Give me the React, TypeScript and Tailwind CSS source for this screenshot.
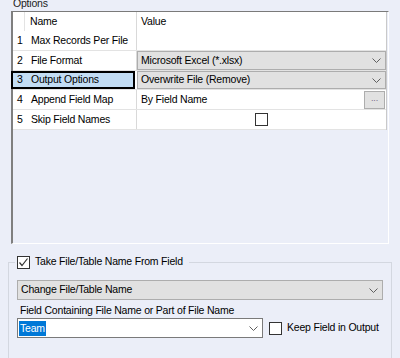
import React from "react";

const Chevron = () => (
  <svg width="9" height="5" viewBox="0 0 9 5" className="shrink-0">
    <path d="M0.5 0.5 L4.5 4.5 L8.5 0.5" fill="none" stroke="#5f5f5f" strokeWidth="1" />
  </svg>
);

const Check = () => (
  <svg width="11" height="11" viewBox="0 0 11 11">
    <path d="M1.5 5.5 L4 8.5 L9.5 1.5" fill="none" stroke="#333" strokeWidth="1.2" />
  </svg>
);

const Dropdown = ({ text }: { text: string }) => (
  <div className="flex-1 h-full bg-[#e1e1e1] border border-[#adadad] flex items-center justify-between pl-[3px] pr-[4px]">
    <span>{text}</span>
    <Chevron />
  </div>
);

export default function App() {
  return (
    <div
      className="w-[400px] h-[358px] bg-[#ebeef8] overflow-hidden text-[10.5px] tracking-[-0.2px] text-black whitespace-nowrap"
      style={{ fontFamily: '"Liberation Sans", Arial, sans-serif' }}
    >
      <div className="h-[11px] pl-[13px] overflow-hidden">
        <div className="-mt-[4px] leading-[14px] text-[#222]">Options</div>
      </div>

      {/* property grid */}
      <div className="ml-[11px] w-[378px] h-[233px] border-t border-l-2 border-t-[#7a7a7a] border-l-[#7f7f7f] border-r border-b border-r-white border-b-white">
        <div className="w-[374px] bg-white border-r border-[#c9c9c9]">
          {/* header */}
          <div className="flex h-[19px]">
            <div className="w-[12px] border-r border-[#e3e3e3]" />
            <div className="w-[112px] border-r border-[#d9d9d9] pl-[5px] flex items-center">Name</div>
            <div className="flex-1 pl-[4px] flex items-center">Value</div>
          </div>
          {/* row 1 */}
          <div className="flex h-[20px] border-b border-[#e3e3e3]">
            <div className="w-[12px] pl-[4px] flex items-center">1</div>
            <div className="w-[112px] border-r border-[#d9d9d9] pl-[6px] flex items-center">Max Records Per File</div>
            <div className="flex-1" />
          </div>
          {/* row 2 */}
          <div className="flex h-[20px] border-b border-[#e3e3e3]">
            <div className="w-[12px] pl-[4px] flex items-center">2</div>
            <div className="w-[112px] border-r border-[#d9d9d9] pl-[6px] flex items-center">File Format</div>
            <Dropdown text="Microsoft Excel (*.xlsx)" />
          </div>
          {/* row 3 selected */}
          <div className="flex h-[19px] border-b border-[#e3e3e3]">
            <div className="w-[124px] -ml-[2px] border-2 border-black bg-[#c3ddf4] flex items-center">
              <span className="pl-[4px] w-[14px]">3</span>
              <span className="pl-[4px]">Output Options</span>
            </div>
            <div className="w-[2px]" />
            <Dropdown text="Overwrite File (Remove)" />
          </div>
          {/* row 4 */}
          <div className="flex h-[20px] border-b border-[#e3e3e3]">
            <div className="w-[12px] pl-[4px] flex items-center">4</div>
            <div className="w-[112px] border-r border-[#d9d9d9] pl-[6px] flex items-center">Append Field Map</div>
            <div className="flex-1 flex items-center justify-between pl-[4px] pr-[1px]">
              <span>By Field Name</span>
              <div className="w-[21px] h-[18px] bg-[#e1e1e1] border border-[#adadad] flex items-center justify-center text-[9px] text-[#7a6a8a] leading-none pb-[3px]">
                ...
              </div>
            </div>
          </div>
          {/* row 5 */}
          <div className="flex h-[20px] border-b border-[#e3e3e3]">
            <div className="w-[12px] pl-[4px] flex items-center">5</div>
            <div className="w-[112px] border-r border-[#d9d9d9] pl-[6px] flex items-center">Skip Field Names</div>
            <div className="flex-1 flex items-center justify-center">
              <div className="w-[13px] h-[13px] border border-[#333] bg-white" />
            </div>
          </div>
        </div>
      </div>

      {/* group box */}
      <fieldset className="ml-[8px] w-[384px] h-[130px] mt-[10px] border border-[#d3d7e0] px-[6px]">
        <legend className="px-[2px] pr-[6px]">
          <div className="flex items-center h-[16px]">
            <div className="w-[13px] h-[13px] border border-[#333] bg-white flex items-center justify-center">
              <Check />
            </div>
            <span className="ml-[5px]">Take File/Table Name From Field</span>
          </div>
        </legend>
        <div className="mx-[2px] mt-[10px] h-[20px] flex">
          <Dropdown text="Change File/Table Name" />
        </div>
        <div className="ml-[5px] mt-[2px] leading-[16px]">Field Containing File Name or Part of File Name</div>
        <div className="ml-[2px] flex items-center">
          <div className="w-[246px] h-[20px] bg-white border border-[#7a7a7a] flex items-center justify-between pl-[1px] pr-[4px]">
            <span className="bg-[#0078d7] text-white px-[1px] leading-[15px]">Team</span>
            <Chevron />
          </div>
          <div className="ml-[6px] w-[13px] h-[13px] border border-[#333] bg-white" />
          <span className="ml-[5px]">Keep Field in Output</span>
        </div>
      </fieldset>
    </div>
  );
}
